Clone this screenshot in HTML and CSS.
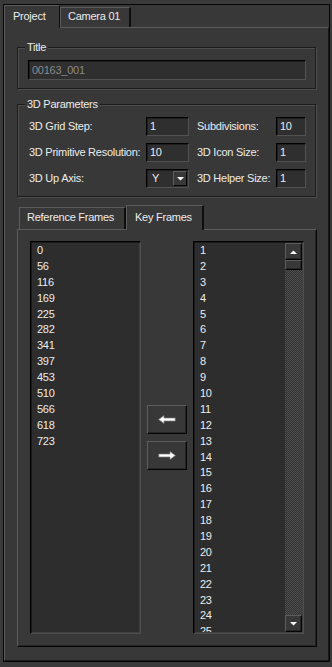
FILE: index.html
```html
<!DOCTYPE html>
<html>
<head>
<meta charset="utf-8">
<title>Project</title>
<link rel="stylesheet" href="styles.css">
</head>
<body>
<div class="frame">
  <div class="tabs">
    <div class="tab tab-project active">Project</div>
    <div class="tab tab-camera">Camera 01</div>
  </div>
  <div class="panel">
    <fieldset class="group group-title">
      <legend>Title</legend>
      <div class="field field-title">00163_001</div>
    </fieldset>
    <fieldset class="group group-params">
      <legend>3D Parameters</legend>
      <div class="params">
        <span class="lbl">3D Grid Step:</span>
        <div class="field num">1</div>
        <span class="lbl lbl2">Subdivisions:</span>
        <div class="field num">10</div>

        <span class="lbl">3D Primitive Resolution:</span>
        <div class="field num">10</div>
        <span class="lbl lbl2">3D Icon Size:</span>
        <div class="field num">1</div>

        <span class="lbl">3D Up Axis:</span>
        <div class="field select">
          <span class="select-value">Y</span>
          <span class="select-btn"><svg width="7" height="4" viewBox="0 0 7 4"><polygon points="0,0 7,0 3.5,3.5" fill="#fff"/></svg></span>
        </div>
        <span class="lbl lbl2">3D Helper Size:</span>
        <div class="field num">1</div>
      </div>
    </fieldset>
    <div class="subtabs">
      <div class="subtab sub-ref">Reference Frames</div>
      <div class="subtab sub-key active">Key Frames</div>
    </div>
    <div class="subpanel">
      <div class="list list-left">
        <div class="item">0</div>
        <div class="item">56</div>
        <div class="item">116</div>
        <div class="item">169</div>
        <div class="item">225</div>
        <div class="item">282</div>
        <div class="item">341</div>
        <div class="item">397</div>
        <div class="item">453</div>
        <div class="item">510</div>
        <div class="item">566</div>
        <div class="item">618</div>
        <div class="item">723</div>
      </div>
      <div class="mid">
        <div class="btn"><svg width="18" height="9" viewBox="0 0 18 9"><path d="M0.6 4.5 L6 0.6 V3 H17.2 V6 H6 V8.4 Z" fill="#fff" stroke="#7c7c7c" stroke-width="0.7"/></svg></div>
        <div class="btn"><svg width="18" height="9" viewBox="0 0 18 9"><path d="M17.4 4.5 L12 0.6 V3 H0.8 V6 H12 V8.4 Z" fill="#fff" stroke="#7c7c7c" stroke-width="0.7"/></svg></div>
      </div>
      <div class="list list-right">
        <div class="items">
          <div class="item">1</div>
          <div class="item">2</div>
          <div class="item">3</div>
          <div class="item">4</div>
          <div class="item">5</div>
          <div class="item">6</div>
          <div class="item">7</div>
          <div class="item">8</div>
          <div class="item">9</div>
          <div class="item">10</div>
          <div class="item">11</div>
          <div class="item">12</div>
          <div class="item">13</div>
          <div class="item">14</div>
          <div class="item">15</div>
          <div class="item">16</div>
          <div class="item">17</div>
          <div class="item">18</div>
          <div class="item">19</div>
          <div class="item">20</div>
          <div class="item">21</div>
          <div class="item">22</div>
          <div class="item">23</div>
          <div class="item">24</div>
          <div class="item">25</div>
        </div>
        <div class="scrollbar">
          <div class="sb-btn"><svg width="7" height="4" viewBox="0 0 7 4"><polygon points="0,4 7,4 3.5,0.5" fill="#fff"/></svg></div>
          <div class="sb-thumb"></div>
          <div class="sb-track"></div>
          <div class="sb-btn"><svg width="7" height="4" viewBox="0 0 7 4"><polygon points="0,0 7,0 3.5,3.5" fill="#fff"/></svg></div>
        </div>
      </div>
    </div>
  </div>
</div>
</body>
</html>
```

FILE: styles.css
```css
* { box-sizing: border-box; }
html, body { margin: 0; }
body {
  width: 332px;
  height: 667px;
  overflow: hidden;
  padding: 4px 2px 5px 3px;
  background: #3a3a3a;
  font-family: "Liberation Sans", Arial, sans-serif;
  font-size: 11px;
  line-height: 13px;
  letter-spacing: -0.25px;
  color: #ececec;
}
.frame {
  width: 327px;
  height: 658px;
  border: 1px solid #050505;
  background: #383838;
  display: flex;
  flex-direction: column;
}

/* top tabs */
.tabs {
  display: flex;
  align-items: flex-end;
  height: 22px;
  flex: none;
  position: relative;
  z-index: 1;
}
.tab {
  height: 20px;
  background: #383838;
  border-top: 1px solid #5c5c5c;
  border-left: 1px solid #5c5c5c;
  border-right: 2px solid #0d0d0d;
  padding: 2px 0 0 7px;
  white-space: nowrap;
}
.tab.active {
  height: 23px;
  margin-bottom: -1px;
  padding: 4px 0 0 8px;
  border-right-width: 1px;
}
.tab-project { width: 56px; }
.tab-camera { width: 71px; }

.panel {
  flex: 1;
  min-height: 0;
  display: flex;
  flex-direction: column;
  background: #383838;
  border-top: 1px solid #5c5c5c;
  border-left: 1px solid #5c5c5c;
  border-right: 1px solid #1a1a1a;
  border-bottom: 1px solid #1a1a1a;
  padding: 0 11px 13px 12px;
}

/* group boxes */
.group {
  margin: 13px 0 0;
  width: 299px;
  min-width: 0;
  flex: none;
  padding: 6px 9px 8px 10px;
  border: 1px solid #1c1c1c;
  box-shadow: inset 1px 1px 0 #4e4e4e, 1px 1px 0 #4e4e4e;
}
.group legend {
  padding: 0 2px;
  margin-left: -3px;
  line-height: 13px;
  background: #383838;
}
.group-params { margin-top: 9px; }

.field {
  background: #2f2f2f;
  border: 1px solid;
  border-color: #000 #525252 #525252 #000;
  box-shadow: inset 1px 1px 0 #1e1e1e;
  padding-left: 3px;
  white-space: nowrap;
}
.field-title {
  width: 278px;
  height: 20px;
  line-height: 18px;
  color: #8a8a8a;
}

.params {
  display: grid;
  grid-template-columns: 118px 43px 87px 30px;
  grid-auto-rows: 19px;
  row-gap: 7px;
  align-items: center;
}
.lbl { padding-left: 1px; white-space: nowrap; }
.lbl2 { padding-left: 8px; }
.num {
  height: 19px;
  line-height: 17px;
}
.select {
  height: 19px;
  display: flex;
  align-items: center;
  padding-left: 0;
}
.select-value {
  flex: 1;
  padding-left: 5px;
  line-height: 17px;
}
.select-btn {
  width: 14px;
  height: 15px;
  margin-right: 1px;
  display: flex;
  align-items: center;
  justify-content: center;
  background: #383838;
  border: 1px solid;
  border-color: #5c5c5c #050505 #050505 #5c5c5c;
}

/* sub tabs */
.subtabs {
  display: flex;
  align-items: flex-end;
  height: 24px;
  flex: none;
  margin: 8px 0 0 2px;
  position: relative;
  z-index: 1;
}
.subtab {
  height: 22px;
  background: #383838;
  border-top: 1px solid #5c5c5c;
  border-left: 1px solid #5c5c5c;
  border-right: 2px solid #0d0d0d;
  padding: 3px 0 0 7px;
  white-space: nowrap;
}
.sub-ref { width: 107px; }
.sub-key {
  width: 78px;
  height: 25px;
  margin-bottom: -1px;
  padding: 5px 0 0 8px;
}

.subpanel {
  flex: 1;
  min-height: 0;
  display: flex;
  background: #383838;
  border-top: 1px solid #5c5c5c;
  border-left: 1px solid #5c5c5c;
  border-right: 1px solid #050505;
  border-bottom: 1px solid #050505;
  box-shadow: inset -1px -1px 0 #262626;
  padding: 11px 12px 12px 12px;
}

.list {
  width: 111px;
  flex: none;
  min-height: 0;
  background: #2d2d2d;
  border: 1px solid;
  border-color: #000 #4e4e4e #4e4e4e #000;
  box-shadow: inset 1px 1px 0 #1a1a1a, inset -1px -1px 0 #404040;
  padding: 1px;
  overflow: hidden;
}
.item {
  line-height: 15.9px;
  height: 15.9px;
  padding-left: 5px;
  white-space: nowrap;
}
.list-right {
  display: flex;
}
.items {
  flex: 1;
  overflow: hidden;
}

.mid {
  width: 52px;
  flex: none;
  display: flex;
  flex-direction: column;
  align-items: center;
  justify-content: center;
  gap: 7px;
}
.btn {
  width: 40px;
  height: 29px;
  display: flex;
  align-items: center;
  justify-content: center;
  background: #383838;
  border: 1px solid;
  border-color: #5c5c5c #050505 #050505 #5c5c5c;
  box-shadow: inset -1px -1px 0 #262626;
}

.scrollbar {
  width: 17px;
  flex: none;
  display: flex;
  flex-direction: column;
}
.sb-btn, .sb-thumb {
  background: #383838;
  border: 1px solid;
  border-color: #5c5c5c #050505 #050505 #5c5c5c;
  box-shadow: inset -1px -1px 0 #262626;
}
.sb-btn {
  height: 17px;
  flex: none;
  display: flex;
  align-items: center;
  justify-content: center;
}
.sb-thumb {
  height: 10px;
  flex: none;
}
.sb-track {
  flex: 1;
  background: repeating-conic-gradient(#4e4e4e 0 25%, #333 0 50%) 0 0 / 2px 2px;
}
```
